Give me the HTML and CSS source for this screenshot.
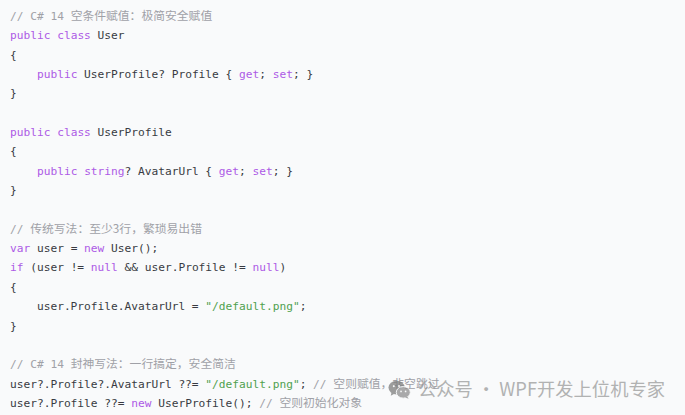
FILE: index.html
```html
<!DOCTYPE html>
<html lang="zh">
<head>
<meta charset="utf-8">
<link rel="stylesheet" href="styles.css">
</head>
<body>
<pre class="code"><span class="c">// C# 14 <span class="zh">空条件赋值：极简安全赋值</span></span>
<span class="k">public</span> <span class="k">class</span> User
{
    <span class="k">public</span> UserProfile? Profile { <span class="k">get</span>; <span class="k">set</span>; }
}

<span class="k">public</span> <span class="k">class</span> UserProfile
{
    <span class="k">public</span> <span class="k">string</span>? AvatarUrl { <span class="k">get</span>; <span class="k">set</span>; }
}

<span class="c">// <span class="zh">传统写法：至少3行，繁琐易出错</span></span>
<span class="k">var</span> user = <span class="k">new</span> User();
<span class="k">if</span> (user != <span class="k">null</span> &amp;&amp; user.Profile != <span class="k">null</span>)
{
    user.Profile.AvatarUrl = <span class="s">"/default.png"</span>;
}

<span class="c">// C# 14 <span class="zh">封神写法：一行搞定，安全简洁</span></span>
user?.Profile?.AvatarUrl ??= <span class="s">"/default.png"</span>; <span class="c">// <span class="zh">空则赋值，非空跳过</span></span>
user?.Profile ??= <span class="k">new</span> UserProfile(); <span class="c">// <span class="zh">空则初始化对象</span></span></pre>
<div class="watermark">
  <svg class="wx" viewBox="0 0 24 20" width="23" height="19">
    <ellipse cx="9" cy="8" rx="8.6" ry="7.2" fill="#7d7d7d"/>
    <path d="M3.6 13.2 L2.8 16.6 L6.6 14.4 Z" fill="#7d7d7d"/>
    <ellipse cx="16" cy="13" rx="7.4" ry="6.1" fill="#8f8f8f" stroke="#f9fafb" stroke-width="1"/>
    <path d="M20.2 17.4 L21.6 19.8 L17.8 18.4 Z" fill="#8f8f8f"/>
    <circle cx="6" cy="6.4" r="1.1" fill="#f9fafb"/>
    <circle cx="11.6" cy="6.4" r="1.1" fill="#f9fafb"/>
    <circle cx="13.6" cy="12" r="0.9" fill="#f9fafb"/>
    <circle cx="18.4" cy="12" r="0.9" fill="#f9fafb"/>
  </svg>
  <span class="wm-text">公众号 · WPF开发上位机专家</span>
</div>
</body>
</html>
```
FILE: styles.css
```css
html, body {
  margin: 0;
  padding: 0;
  background: #f9fafb;
}
body {
  position: relative;
  width: 685px;
  height: 415px;
  overflow: hidden;
}
.code {
  margin: 0;
  padding: 7px 0 0 10px;
  font-family: "DejaVu Sans Mono", "Noto Sans CJK SC", monospace;
  font-size: 11.2px;
  line-height: 19.35px;
  color: #383a42;
}
.k { color: #ad5ae6; }
.s { color: #50a14f; }
.c { color: #a0a1a7; }
.zh {
  font-family: "Noto Sans CJK SC", sans-serif;
  font-size: 11.8px;
  line-height: 0;
}
.watermark {
  position: absolute;
  left: 388px;
  top: 375px;
  display: flex;
  align-items: center;
  gap: 7px;
  opacity: 0.75;
}
.wx { display: block; margin-top: 3px; }
.wm-text {
  font-family: "Noto Sans CJK SC", sans-serif;
  font-size: 18.3px;
  line-height: 26px;
  color: #9a9a9a;
}
```
